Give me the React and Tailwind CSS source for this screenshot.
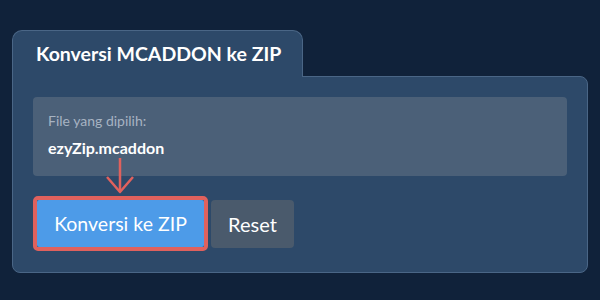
const App = () => {
    return (
        <div className="w-[600px] h-[300px] bg-[#10223a] pt-[30px] px-3" style={{ fontFamily: "Lato, 'Noto Sans', sans-serif" }}>
            {/* Tab */}
            <div className="relative z-10 w-[291px] h-[47px] -mb-px bg-[#2d4969] border border-b-0 border-[#4a6686] rounded-t-[10px] pl-6 flex items-center">
                <h1 className="text-[19.5px] font-bold text-white leading-none -mt-[1px] -ml-[1px]">Konversi MCADDON ke ZIP</h1>
            </div>

            {/* Panel */}
            <div className="h-[197px] bg-[#2d4969] border border-[#4a6686] rounded-b-[8px] rounded-tr-[8px] px-5 pt-5">
                <div className="relative">
                    <div className="h-[79px] bg-[#4b6078] rounded-[4px] px-[15px] pt-[17px]">
                        <p className="text-[14px] text-[#a7b3c2] leading-none">File yang dipilih:</p>
                        <p className="text-[16px] font-bold text-white leading-none mt-[12px]">ezyZip.mcaddon</p>
                    </div>

                    {/* Arrow pointing to the convert button */}
                    <svg className="absolute left-[72px] top-[60px]" width="30" height="38" viewBox="0 0 30 38" fill="none">
                        <path d="M15 1 V35" stroke="#e0615d" strokeWidth="2.5" />
                        <path d="M2 20 L15 35 L28 20" stroke="#e0615d" strokeWidth="2.5" strokeLinejoin="round" />
                    </svg>

                    <div className="flex items-center gap-[3px] mt-5">
                        <div className="border-[4px] border-[#e0615d] rounded-[5px]">
                            <button className="w-[167px] h-[47px] bg-[#4d9be8] text-white text-[19.5px] rounded-[2px]">
                                Konversi ke ZIP
                            </button>
                        </div>
                        <button className="w-[83px] h-[48px] bg-[#4a5a6c] text-white text-[20px] rounded-[4px]">
                            Reset
                        </button>
                    </div>
                </div>
            </div>
        </div>
    );
};

export default App;
